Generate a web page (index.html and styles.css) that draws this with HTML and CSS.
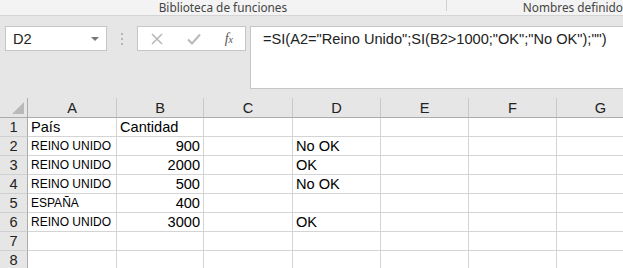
FILE: index.html
```html
<!DOCTYPE html>
<html lang="es">
<head>
  <meta charset="UTF-8">
  <title>Hoja</title>
  <link rel="stylesheet" href="styles.css">
</head>
<body>
  <div class="ribbon">
    <div class="group group-fn">Biblioteca de funciones</div>
    <div class="group group-names">Nombres definido</div>
  </div>

  <div class="formula-bar">
    <div class="name-box">
      <span>D2</span>
      <span class="caret"></span>
    </div>
    <div class="grip"><i></i><i></i><i></i></div>
    <div class="buttons">
      <svg width="12" height="12" viewBox="0 0 12 12"><path d="M1 1L11 11M11 1L1 11" stroke="#b9b9b9" stroke-width="1.6" fill="none"/></svg>
      <svg width="14" height="12" viewBox="0 0 14 12"><path d="M1 6.5L5 10.5L13 1.5" stroke="#b9b9b9" stroke-width="2" fill="none"/></svg>
      <span class="fx">f<sub>x</sub></span>
    </div>
    <div class="formula">=SI(A2="Reino Unido";SI(B2&gt;1000;"OK";"No OK");"")</div>
  </div>

  <div class="sheet">
    <div class="hd corner"><span class="tri"></span></div>
    <div class="hd col">A</div><div class="hd col">B</div><div class="hd col">C</div><div class="hd col">D</div>
    <div class="hd col">E</div><div class="hd col">F</div><div class="hd col">G</div>

    <div class="hd row">1</div>
    <div class="c">País</div><div class="c">Cantidad</div><div class="c"></div><div class="c"></div><div class="c"></div><div class="c"></div><div class="c"></div>

    <div class="hd row">2</div>
    <div class="c sm">REINO UNIDO</div><div class="c num">900</div><div class="c"></div><div class="c">No OK</div><div class="c"></div><div class="c"></div><div class="c"></div>

    <div class="hd row">3</div>
    <div class="c sm">REINO UNIDO</div><div class="c num">2000</div><div class="c"></div><div class="c">OK</div><div class="c"></div><div class="c"></div><div class="c"></div>

    <div class="hd row">4</div>
    <div class="c sm">REINO UNIDO</div><div class="c num">500</div><div class="c"></div><div class="c">No OK</div><div class="c"></div><div class="c"></div><div class="c"></div>

    <div class="hd row">5</div>
    <div class="c sm">ESPAÑA</div><div class="c num">400</div><div class="c"></div><div class="c"></div><div class="c"></div><div class="c"></div><div class="c"></div>

    <div class="hd row">6</div>
    <div class="c sm">REINO UNIDO</div><div class="c num">3000</div><div class="c"></div><div class="c">OK</div><div class="c"></div><div class="c"></div><div class="c"></div>

    <div class="hd row">7</div>
    <div class="c"></div><div class="c"></div><div class="c"></div><div class="c"></div><div class="c"></div><div class="c"></div><div class="c"></div>

    <div class="hd row">8</div>
    <div class="c"></div><div class="c"></div><div class="c"></div><div class="c"></div><div class="c"></div><div class="c"></div><div class="c"></div>
  </div>
</body>
</html>
```

FILE: styles.css
```css
*{
  margin:0;
  padding:0;
  box-sizing:border-box;
}
body{
  width:623px;
  height:268px;
  overflow:hidden;
  background:#e6e6e6;
  font-family:"Liberation Sans", Arial, sans-serif;
  color:#000;
}

/* ribbon group labels */
.ribbon{
  height:16px;
  background:#f3f3f3;
  border-bottom:1px solid #d5d5d5;
  display:flex;
  font-family:"Noto Sans", "Open Sans", sans-serif;
  font-size:11.8px;
  color:#444;
  line-height:15px;
}
.group{
  white-space:nowrap;
}
.group-fn{
  width:458px;
  text-align:center;
  border-right:1px solid #d0d0d0;
  height:11px;
}
.group-names{
  padding-left:76px;
}

/* formula bar */
.formula-bar{
  height:82px;
  padding-top:10px;
  display:flex;
  align-items:flex-start;
}
.name-box{
  margin-left:5px;
  width:102px;
  height:25px;
  background:#fff;
  border:1px solid #c6c6c6;
  display:flex;
  align-items:center;
  justify-content:space-between;
  padding:0 7px 0 7px;
  font-size:14.6px;
  color:#222;
}
.caret{
  width:0;
  height:0;
  border-left:4px solid transparent;
  border-right:4px solid transparent;
  border-top:4px solid #777;
}
.grip{
  width:30px;
  height:25px;
  display:flex;
  flex-direction:column;
  align-items:center;
  justify-content:center;
  gap:3px;
}
.grip i{
  width:2px;
  height:2px;
  background:#b5b5b5;
}
.buttons{
  width:109px;
  height:25px;
  background:#fff;
  border:1px solid #c6c6c6;
  display:flex;
  align-items:center;
  justify-content:space-between;
  padding:0 12px 0 13px;
}
.fx{
  font-family:"Liberation Serif", serif;
  font-style:italic;
  font-size:14px;
  color:#555;
  line-height:1;
}
.fx sub{
  font-size:10px;
  vertical-align:0;
}
.formula{
  margin-left:4px;
  flex:1;
  height:63px;
  background:#fff;
  border:1px solid #c6c6c6;
  border-right:none;
  padding:4px 0 0 12px;
  font-size:14.6px;
  color:#222;
  white-space:nowrap;
}

/* sheet */
.sheet{
  display:grid;
  grid-template-columns:28px 89px 87px 89px 88px 88px 88px 88px;
  grid-template-rows:20px repeat(8, 19px);
  background:#fff;
  font-size:14.6px;
}
.hd{
  background:#e6e6e6;
  color:#222;
  display:flex;
  align-items:center;
  justify-content:center;
}
.col{
  border-right:1px solid #c9c9c9;
  border-bottom:1px solid #ababab;
}
.corner{
  position:relative;
  border-right:1px solid #ababab;
  border-bottom:1px solid #ababab;
}
.tri{
  position:absolute;
  right:3px;
  bottom:3px;
  width:0;
  height:0;
  border-left:12px solid transparent;
  border-bottom:12px solid #b9b9b9;
}
.row{
  border-right:1px solid #ababab;
  border-bottom:1px solid #d0d0d0;
}
.c{
  border-right:1px solid #d4d4d4;
  border-bottom:1px solid #d4d4d4;
  padding:0 3px;
  line-height:18px;
  white-space:nowrap;
  overflow:hidden;
}
.sm{
  font-size:12px;
  line-height:19px;
}
.num{
  text-align:right;
}
```
